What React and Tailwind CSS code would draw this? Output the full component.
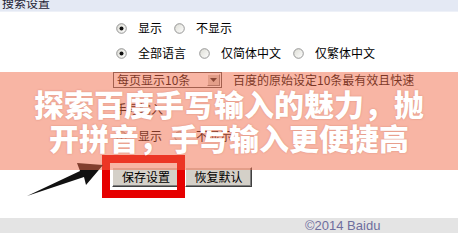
import React from 'react';

/* ---- Radio (old-style) ---- */
function Radio({ checked, className = '' }) {
  return (
    <svg width="11" height="11" viewBox="0 0 11 11" className={`shrink-0 ${className}`}>
      <defs>
        <linearGradient id="rg" x1="0" y1="0" x2="1" y2="1">
          <stop offset="0" stopColor="#dcdcd4" />
          <stop offset="1" stopColor="#ffffff" />
        </linearGradient>
      </defs>
      <circle cx="5.5" cy="5.5" r="4.8" fill="url(#rg)" stroke="#8a8a8a" strokeWidth="0.9" />
      {checked && <circle cx="5.5" cy="5.5" r="2" fill="#111" />}
    </svg>
  );
}

function Option({ checked, label, className = '' }) {
  return (
    <div className={`flex items-center ${className}`}>
      <Radio checked={checked} />
      <span className="ml-[11px] whitespace-nowrap">{label}</span>
    </div>
  );
}

function Button({ children, className = '' }) {
  return (
    <div
      className={`h-[20px] flex items-center justify-center bg-[#d4d0c8] border border-t-white border-l-white border-r-[#404040] border-b-[#404040] shadow-[inset_-1px_-1px_0_#808080] ${className}`}
    >
      {children}
    </div>
  );
}

export default function App() {
  return (
    <div className="relative w-[458px] h-[245px] overflow-hidden bg-white text-[12px] leading-[16px] text-black font-['Noto_Sans_CJK_SC','Noto_Sans',sans-serif]">
      {/* header */}
      <div className="h-[12px] bg-[#e4e9f4] border-b border-[#eef1f8] overflow-hidden">
        <span className="block pl-[2px] leading-[12px] -mt-[3px] text-[#1d2233]">搜索设置</span>
      </div>

      {/* settings */}
      <div className="pl-[116px]">
        <div className="mt-[8px] h-[16px] flex items-center">
          <Option checked label="显示" />
          <Option label="不显示" className="ml-[12px]" />
        </div>
        <div className="mt-[9px] h-[16px] flex items-center">
          <Option checked label="全部语言" />
          <Option label="仅简体中文" className="ml-[13px]" />
          <Option label="仅繁体中文" className="ml-[12px]" />
        </div>
        <div className="mt-[11px] h-[16px] flex items-center -ml-[3px]">
          <div className="w-[109px] h-[16px] flex items-center border border-[#555] bg-white">
            <span className="pl-[3px] flex-1 whitespace-nowrap">每页显示10条</span>
            <span className="w-[13px] h-[12px] mr-[1px] bg-[#d4d0c8] border border-t-white border-l-white border-r-[#808080] border-b-[#808080] flex items-center justify-center">
              <svg width="7" height="4" viewBox="0 0 7 4"><path d="M0 0h7L3.5 4z" fill="#222" /></svg>
            </span>
          </div>
          <span className="ml-[11px] whitespace-nowrap">百度的原始设定10条最有效且快速</span>
        </div>
        <div className="mt-[13px] h-[16px] flex items-center -ml-[1px]">
          <span>手写输入</span>
        </div>
        <div className="mt-[11px] h-[16px] flex items-center">
          <Option checked label="显示" />
          <Option label="不显示" className="ml-[12px]" />
        </div>
        <div className="mt-[23px] flex items-center gap-[5px] -ml-[4px]">
          <Button className="w-[68px]">保存设置</Button>
          <Button className="w-[67px]">恢复默认</Button>
        </div>
      </div>

      {/* footer */}
      <div className="mt-[31px] h-[15px] bg-[#e4e4e4] pl-[305px] flex items-center">
        <span className="text-[13px] leading-[15px] text-[#6e6e9e] font-['Liberation_Sans',Arial,sans-serif]">©2014 Baidu</span>
      </div>

      {/* annotation: red box + arrow */}
      <div className="absolute left-[102px] top-[155px] w-[83px] h-[43px] border-[8px] border-[#e60000]" />
      <svg className="absolute left-0 top-0" width="458" height="245" viewBox="0 0 458 245">
        <polygon points="27,196 80,171 77,163 103,165 86,185 84,177" fill="#111" />
      </svg>

      {/* banner overlay */}
      <div className="absolute left-0 right-0 top-[72px] h-[98px] bg-[#f26b4a]/50 flex flex-col items-center justify-center pb-[2px]">
        <p className="text-white font-black text-[30px] leading-[34px] whitespace-nowrap [text-shadow:0_0_2px_rgba(160,60,40,0.35)]">探索百度手写输入的魅力，抛</p>
        <p className="text-white font-black text-[30px] leading-[34px] whitespace-nowrap [text-shadow:0_0_2px_rgba(160,60,40,0.35)]">开拼音，手写输入更便捷高</p>
      </div>
    </div>
  );
}
